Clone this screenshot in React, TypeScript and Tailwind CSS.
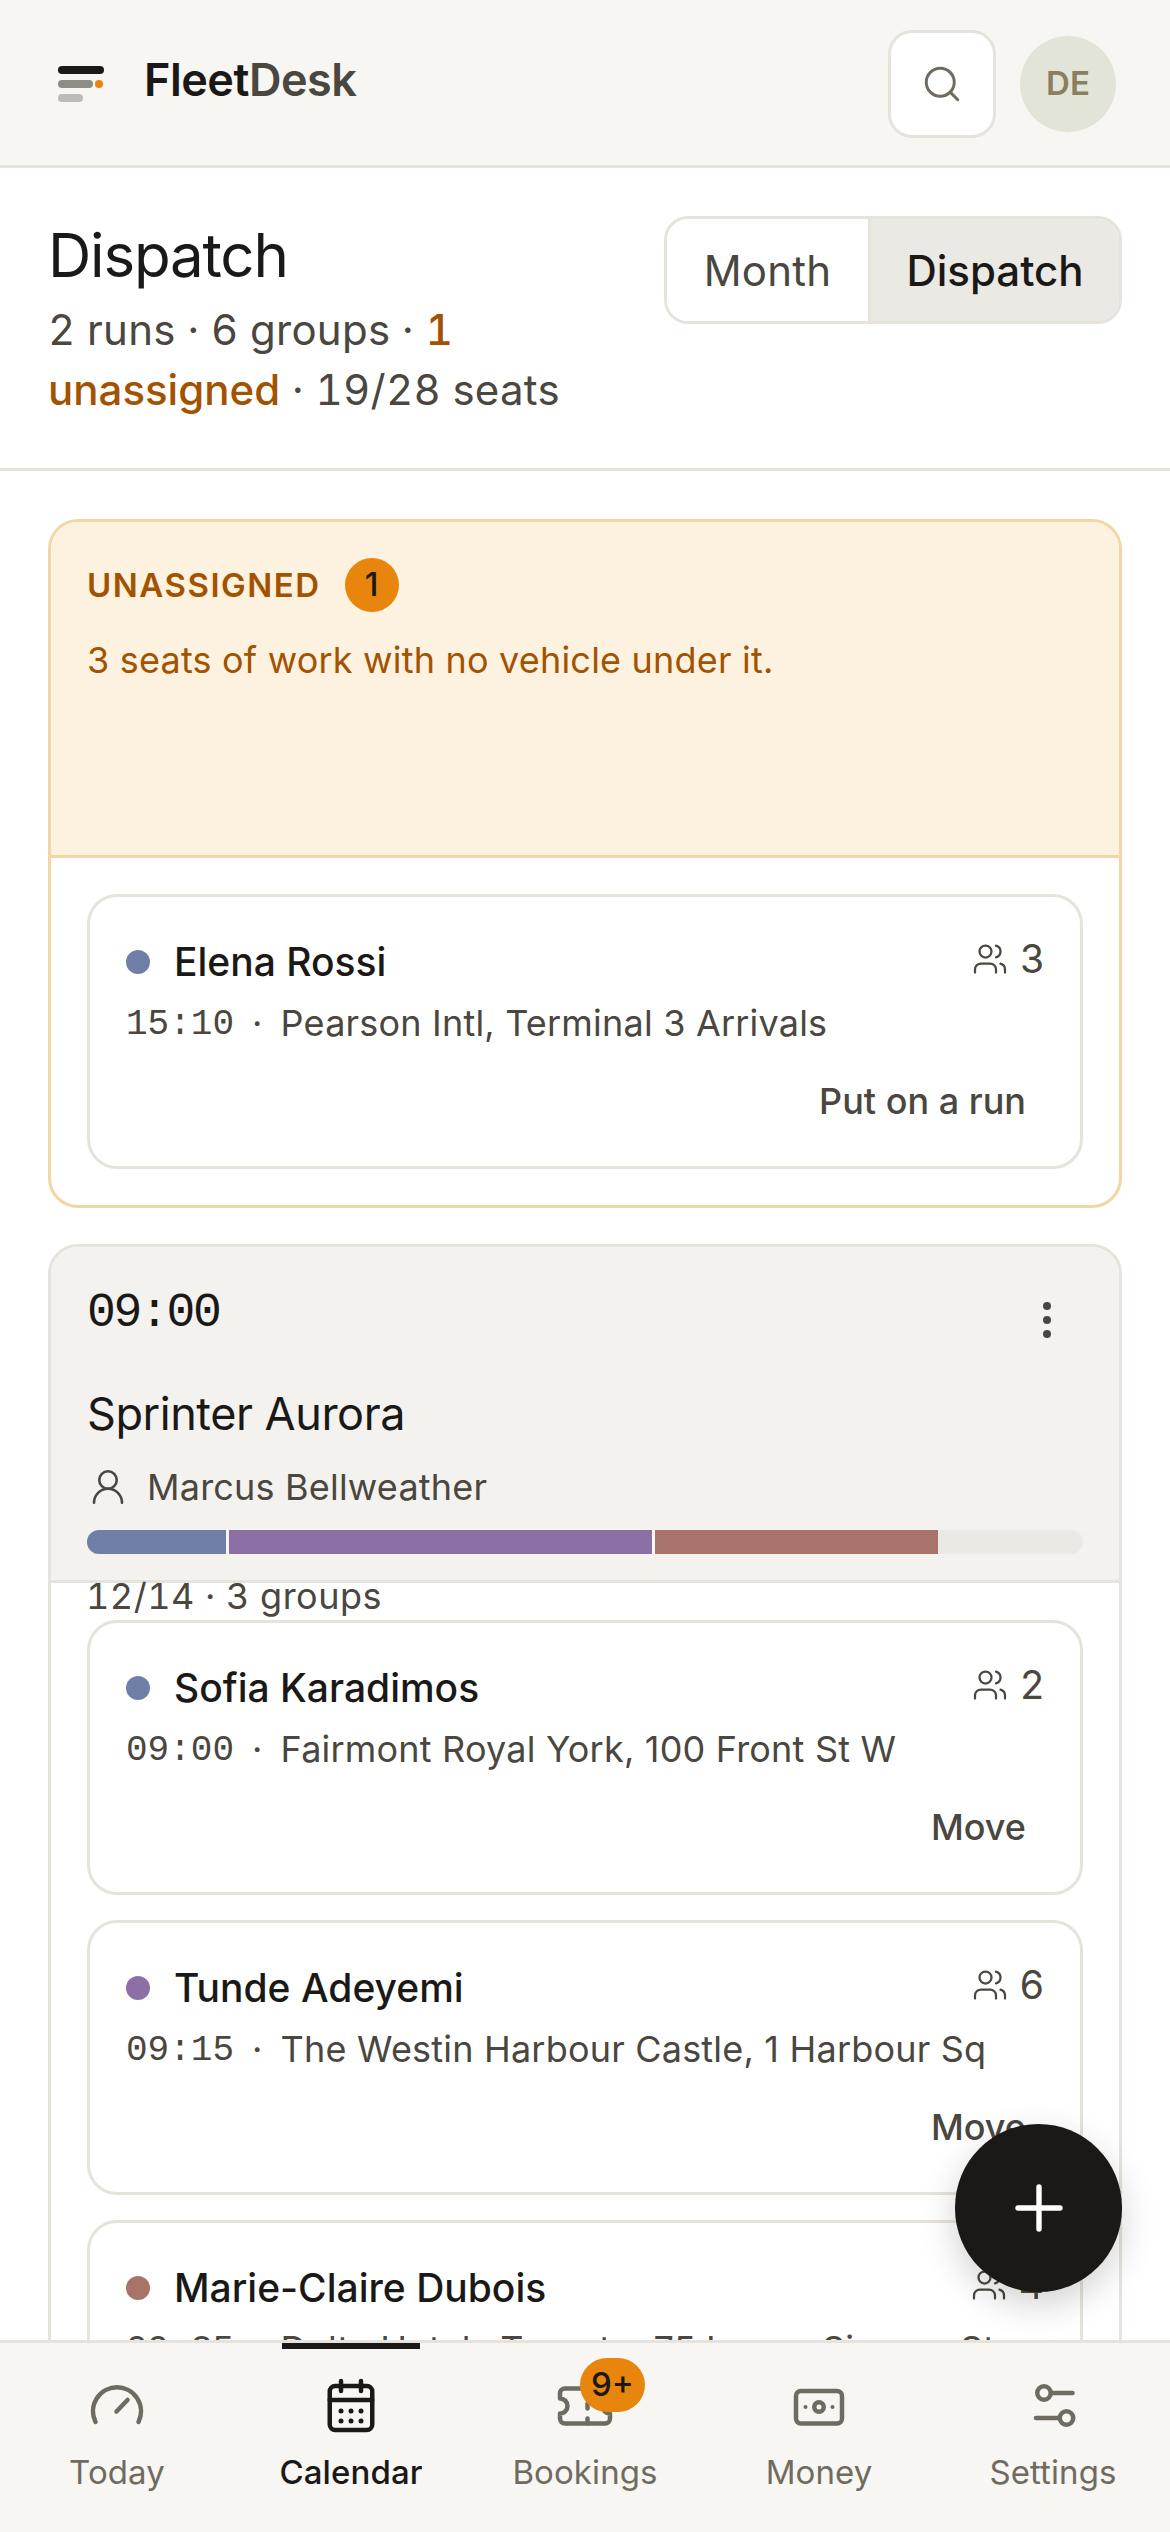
import React from "react";
import { Search, Users, UserRound, Ticket, Plus } from "lucide-react";

const Gauge = () => (
  <svg width="60" height="60" viewBox="0 0 24 24" fill="none" stroke="currentColor" strokeWidth="1.8" strokeLinecap="round">
    <path d="M3.4 18.4a9.6 9.6 0 1 1 17.2 0" />
    <path d="M11.8 14.2 16.2 9.6" />
  </svg>
);
const Cal = () => (
  <svg width="60" height="60" viewBox="0 0 24 24" fill="none" stroke="currentColor" strokeWidth="1.8" strokeLinecap="round">
    <rect x="3.5" y="4" width="17" height="17.6" rx="2.2" />
    <path d="M8 2v4M16 2v4M3.5 9.6h17" />
    <g fill="currentColor" stroke="none">
      <circle cx="8" cy="14" r="1" /><circle cx="12" cy="14" r="1" /><circle cx="16" cy="14" r="1" />
      <circle cx="8" cy="18" r="1" /><circle cx="12" cy="18" r="1" /><circle cx="16" cy="18" r="1" />
    </g>
  </svg>
);
const Money = () => (
  <svg width="60" height="60" viewBox="0 0 24 24" fill="none" stroke="currentColor" strokeWidth="1.8" strokeLinecap="round">
    <rect x="2.8" y="6" width="18.4" height="13" rx="2" />
    <circle cx="12" cy="12.4" r="1.9" />
    <circle cx="6.6" cy="12.4" r=".8" fill="currentColor" stroke="none" />
    <circle cx="17.4" cy="12.4" r=".8" fill="currentColor" stroke="none" />
  </svg>
);
const Sliders = () => (
  <svg width="60" height="60" viewBox="0 0 24 24" fill="none" stroke="currentColor" strokeWidth="1.8" strokeLinecap="round">
    <circle cx="8.4" cy="6.8" r="2.7" />
    <path d="M11.2 6.8h8.6" />
    <circle cx="17.4" cy="16.8" r="2.7" />
    <path d="M5.2 16.8h9.4" />
  </svg>
);

const Logo = () => (
  <svg width="48" height="40" viewBox="0 0 48 40" className="mt-[4px] shrink-0">
    <rect x="0" y="0" width="46" height="8" rx="4" fill="#1a1917" />
    <rect x="0" y="14" width="35" height="8" rx="4" fill="#8f8c86" />
    <circle cx="41" cy="18" r="4" fill="#e8850c" />
    <rect x="0" y="28" width="25" height="8" rx="4" fill="#bdbbb6" />
  </svg>
);

function Group({ color, name, count, time, place, action }: { color: string; name: string; count: number; time: string; place: string; action: string }) {
  return (
    <div className="h-[275px] shrink-0 rounded-[30px] border-[3px] border-[#e6e3dc] bg-white px-[36px] pt-[38px] pb-[34px]">
      <div className="flex h-[54px] items-center justify-between">
        <div className="flex items-center gap-[24px]">
          <span className="h-[24px] w-[24px] rounded-full" style={{ backgroundColor: color }} />
          <span className="text-[39px] leading-[54px] font-medium text-[#1a1917]">{name}</span>
        </div>
        <div className="-mt-[6px] flex items-center gap-[12px] text-[39px] text-[#4a4640]">
          <Users size={36} strokeWidth={1.5} />
          <span>{count}</span>
        </div>
      </div>
      <div className="mt-[7px] flex h-[54px] items-center whitespace-nowrap text-[36px] tracking-[0.2px] text-[#4a4640]">
        <span className="mt-[3px] font-['Liberation_Mono',monospace] tracking-normal">{time}</span>
        <span className="mx-[18px]">·</span>
        <span>{place}</span>
      </div>
      <div className="mt-[21px] flex h-[60px] justify-end">
        <button className="px-[18px] text-[36px] font-medium text-[#4a4640]">{action}</button>
      </div>
    </div>
  );
}

function Tab({ label, active, icon }: { label: string; active?: boolean; icon: React.ReactNode }) {
  return (
    <div className={`relative flex flex-col items-center ${active ? "text-[#1a1917]" : "text-[#6f6b60]"}`}>
      {active && <span className="absolute top-0 left-1/2 h-[6px] w-[138px] -translate-x-1/2 bg-[#1a1917]" />}
      <div className="relative mt-[33px] flex h-[60px] w-[60px] items-center justify-center">{icon}</div>
      <span className={`mt-[12px] text-[33px] leading-[48px] tracking-[0.1px] ${active ? "font-medium" : ""}`}>{label}</span>
    </div>
  );
}

export default function App() {
  return (
    <div className="relative flex h-[2532px] w-[1170px] flex-col overflow-hidden bg-white font-['Inter',sans-serif] text-[#1a1917]">
      <header className="flex h-[168px] shrink-0 items-center justify-between border-b-[3px] border-[#e6e3dc] bg-[#f7f6f2] pt-[3px] pr-[54px] pl-[58px]">
        <div className="flex items-center gap-[38px]">
          <Logo />
          <div className="-mt-[9px] text-[45px] font-semibold tracking-[-0.5px]">
            Fleet<span className="text-[#4a4640]">Desk</span>
          </div>
        </div>
        <div className="flex items-center gap-[24px]">
          <button className="flex h-[108px] w-[108px] items-center justify-center rounded-[24px] border-[3px] border-[#e6e3dc] bg-white text-[#6f6b60]">
            <Search size={42} strokeWidth={1.7} />
          </button>
          <div className="flex h-[96px] w-[96px] items-center justify-center rounded-full bg-[#e3e4d8] text-[33px] font-semibold text-[#8a7f5e]">DE</div>
        </div>
      </header>

      <section className="flex h-[303px] shrink-0 justify-between border-b-[3px] border-[#e6e3dc] pt-[48px] pr-[48px] pl-[48px]">
        <div className="w-[540px]">
          <h1 className="text-[60px] leading-[78px] font-normal tracking-[-1.2px]">Dispatch</h1>
          <p className="mt-[6px] text-[42px] leading-[60px] tracking-[0.25px] text-[#4a4640] tabular-nums">
            2 runs · 6 groups · <span className="font-medium tracking-normal text-[#a35200]">1 unassigned</span> · 19/28 seats
          </p>
        </div>
        <div className="flex h-[108px] overflow-hidden rounded-[24px] border-[3px] border-[#e6e3dc]">
          <button className="w-[204px] border-r-[3px] border-[#e6e3dc] bg-white text-[42px] tracking-[0.2px] text-[#4a4640]">Month</button>
          <button className="w-[248px] bg-[#ebe9e3] text-[42px] font-medium text-[#1a1917]">Dispatch</button>
        </div>
      </section>

      <main className="flex min-h-0 flex-1 flex-col overflow-hidden px-[48px] pt-[48px]">
        <div className="shrink-0 overflow-hidden rounded-[30px] border-[3px] border-[#f2d7a4]">
          <div className="h-[336px] border-b-[3px] border-[#f2d7a4] bg-[#fdf2e0] px-[36px] pt-[36px]">
            <div className="flex h-[54px] items-center gap-[24px]">
              <span className="mt-[2px] text-[33px] font-semibold tracking-[1.5px] text-[#a35200]">UNASSIGNED</span>
              <span className="flex h-[54px] w-[54px] items-center justify-center rounded-full bg-[#e8850c] text-[33px] font-medium text-[#1a1917]">1</span>
            </div>
            <p className="mt-[21px] text-[36px] leading-[54px] tracking-[0.2px] text-[#a35200]">3 seats of work with no vehicle under it.</p>
          </div>
          <div className="p-[36px]">
            <Group color="#6f7fa8" name="Elena Rossi" count={3} time="15:10" place="Pearson Intl, Terminal 3 Arrivals" action="Put on a run" />
          </div>
        </div>

        <div className="mt-[36px] flex min-h-[1200px] shrink-0 flex-col rounded-t-[30px] border-[3px] border-[#e6e3dc]">
          <div className="h-[336px] shrink-0 rounded-t-[27px] border-b-[3px] border-[#e6e3dc] bg-[#f4f2ee] px-[36px] pt-[36px]">
            <div className="flex h-[72px] items-start justify-between">
              <span className="font-['Liberation_Mono',monospace] text-[48px] leading-[60px] tracking-[-2.3px] text-[#1a1917]">09:00</span>
              <svg width="72" height="72" viewBox="0 0 72 72" className="fill-[#4a4640]">
                <circle cx="36" cy="23" r="4" /><circle cx="36" cy="37" r="4" /><circle cx="36" cy="51" r="4" />
              </svg>
            </div>
            <div className="mt-[29px] text-[45px] leading-[60px] tracking-[-0.45px]">Sprinter Aurora</div>
            <div className="mt-[19px] flex h-[48px] items-center gap-[18px] text-[36px] tracking-[0.2px] text-[#4a4640]">
              <UserRound size={42} strokeWidth={1.5} />
              <span>Marcus Bellweather</span>
            </div>
            <div className="mt-[19px] flex h-[24px] overflow-hidden rounded-full bg-[#ebe9e3]">
              <span className="h-full w-[142px] border-r-[3px] border-[#f7f6f2] bg-[#6f7fa8]" />
              <span className="h-full w-[426px] border-r-[3px] border-[#f7f6f2] bg-[#8c6fa5]" />
              <span className="h-full w-[283px] bg-[#a8746a]" />
            </div>
            <div className="mt-[15px] -ml-[1px] text-[36px] leading-[54px] tracking-[0.5px] text-[#4a4640] tabular-nums">12/14 · 3 groups</div>
          </div>
          <div className="flex flex-col gap-[25px] px-[36px] pt-[37px]">
            <Group color="#6f7fa8" name="Sofia Karadimos" count={2} time="09:00" place="Fairmont Royal York, 100 Front St W" action="Move" />
            <Group color="#8c6fa5" name="Tunde Adeyemi" count={6} time="09:15" place="The Westin Harbour Castle, 1 Harbour Sq" action="Move" />
            <Group color="#a8746a" name="Marie-Claire Dubois" count={4} time="09:35" place="Delta Hotels Toronto, 75 Lower Simcoe St" action="Move" />
          </div>
        </div>
      </main>

      <nav className="z-10 grid h-[192px] shrink-0 grid-cols-5 border-t-[3px] border-[#e6e3dc] bg-[#f7f6f2]">
        <Tab label="Today" icon={<Gauge />} />
        <Tab label="Calendar" active icon={<Cal />} />
        <Tab
          label="Bookings"
          icon={
            <>
              <Ticket size={60} strokeWidth={1.8} />
              <span className="absolute -top-[18px] left-[25px] flex h-[54px] w-[65px] items-center justify-center rounded-full bg-[#e8850c] text-[33px] font-medium text-[#1a1917]">9+</span>
            </>
          }
        />
        <Tab label="Money" icon={<Money />} />
        <Tab label="Settings" icon={<Sliders />} />
      </nav>

      <button className="absolute top-[2124px] left-[955px] z-20 flex h-[168px] w-[167px] items-center justify-center rounded-full bg-[#1a1917] text-white shadow-[0_12px_36px_rgba(0,0,0,0.18)]">
        <Plus size={72} strokeWidth={1.8} />
      </button>
    </div>
  );
}
